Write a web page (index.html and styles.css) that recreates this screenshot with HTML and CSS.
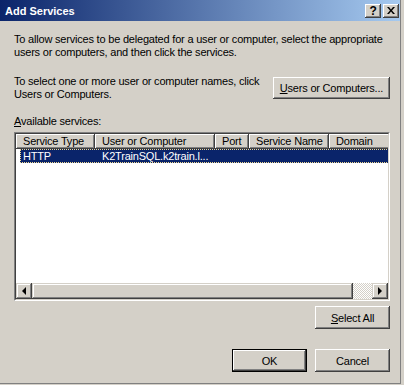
FILE: index.html
```html
<!DOCTYPE html>
<html lang="en">
  <head>
    <meta charset="UTF-8" />
    <title>Add Services</title>
    <link rel="stylesheet" href="styles.css">
  </head>
  <body>
    <div class="window">
      <div class="titlebar">
        <span class="title">Add Services</span>
        <div class="caption-buttons">
          <span class="cap-btn help">?</span>
          <span class="cap-btn">
            <svg width="8" height="7" viewBox="0 0 8 7">
              <path d="M0 0h2l2 2.5L6 0h2L5 3.5 8 7H6L4 4.5 2 7H0l3-3.5z" fill="#000"/>
            </svg>
          </span>
        </div>
      </div>

      <div class="dialog">
        <p class="intro">To allow services to be delegated for a user or computer, select the appropriate<br>users or computers, and then click the services.</p>

        <div class="select-row">
          <p>To select one or more user or computer names, click<br>Users or Computers.</p>
          <button class="btn btn-wide"><u>U</u>sers or Computers...</button>
        </div>

        <div class="list-label"><u>A</u>vailable services:</div>

        <!-- services list view -->
        <div class="listview">
          <div class="lv-inner">
            <div class="lv-header">
              <div class="col c1">Service Type</div>
              <div class="col c2">User or Computer</div>
              <div class="col c3">Port</div>
              <div class="col c4">Service Name</div>
              <div class="col c5">Domain</div>
            </div>
            <div class="lv-rows">
              <div class="lv-row selected">
                <div class="cell c1">HTTP</div>
                <div class="cell c2">K2TrainSQL.k2train.l...</div>
                <div class="cell c3"></div>
                <div class="cell c4"></div>
                <div class="cell c5"></div>
              </div>
            </div>
            <div class="hscroll">
              <div class="sb-btn"><span class="arrow left"></span></div>
              <div class="sb-thumb"></div>
              <div class="sb-track"></div>
              <div class="sb-btn"><span class="arrow right"></span></div>
            </div>
          </div>
        </div>

        <div class="button-row">
          <button class="btn"><u>S</u>elect All</button>
        </div>

        <div class="button-row footer">
          <button class="btn default">OK</button>
          <button class="btn">Cancel</button>
        </div>
      </div>
    </div>
  </body>
</html>
```

FILE: styles.css
```css
body {
  margin: 0;
  background-color: #d4d0c8;
  font-family: "Liberation Sans", Arial, sans-serif;
  font-size: 11px;
  letter-spacing: -0.2px;
  color: #000;
}

.window {
  width: 401px;
  height: 384px;
  box-sizing: border-box;
  border-right: 1px solid #808080;
  border-bottom: 1px solid #808080;
  display: flex;
  flex-direction: column;
}

.titlebar {
  height: 21px;
  display: flex;
  align-items: center;
  justify-content: space-between;
  padding: 0 1px 0 5px;
  background: linear-gradient(to right, #0a246a, #a6caf0);
}

.title {
  color: #fff;
  font-weight: bold;
  font-size: 11px;
  letter-spacing: 0;
}

.caption-buttons {
  display: flex;
  gap: 2px;
}

.cap-btn {
  width: 16px;
  height: 14px;
  box-sizing: border-box;
  background-color: #d4d0c8;
  box-shadow: inset -1px -1px #404040, inset 1px 1px #fff, inset -2px -2px #808080;
  display: flex;
  align-items: center;
  justify-content: center;
}

.cap-btn.help {
  font-weight: bold;
  font-size: 12px;
  line-height: 14px;
}

.dialog {
  padding: 12px 10px 0 14px;
  display: flex;
  flex-direction: column;
}

p {
  margin: 0;
  line-height: 13px;
  white-space: nowrap;
}

.select-row {
  margin-top: 16px;
  display: flex;
  justify-content: space-between;
  align-items: flex-start;
}

.btn {
  width: 75px;
  height: 23px;
  box-sizing: border-box;
  padding: 0;
  border: none;
  background-color: #d4d0c8;
  font-family: inherit;
  font-size: 11px;
  letter-spacing: inherit;
  color: #000;
  box-shadow: inset -1px -1px #404040, inset 1px 1px #fff, inset -2px -2px #808080, inset 2px 2px #d4d0c8;
}

.btn-wide {
  width: 117px;
  height: 22px;
  margin-top: 2px;
}

.btn.default {
  border: 1px solid #000;
}

.list-label {
  margin-top: 14px;
  line-height: 13px;
}

.listview {
  margin-top: 4px;
  height: 169px;
  box-sizing: border-box;
  border: 1px solid;
  border-color: #808080 #fff #fff #808080;
}

.lv-inner {
  height: 100%;
  box-sizing: border-box;
  border: 1px solid;
  border-color: #404040 #d4d0c8 #d4d0c8 #404040;
  background-color: #fff;
  display: flex;
  flex-direction: column;
  overflow: hidden;
}

.lv-header {
  display: flex;
  height: 15px;
  flex-shrink: 0;
}

.col {
  flex-shrink: 0;
  box-sizing: border-box;
  padding-left: 7px;
  line-height: 15px;
  background-color: #d4d0c8;
  box-shadow: inset -1px -1px #404040, inset 1px 1px #fff, inset -2px -2px #808080;
  white-space: nowrap;
  overflow: hidden;
}

.c1 { width: 79px; }
.c2 { width: 120px; }
.c3 { width: 34px; }
.c4 { width: 80px; }
.c5 { width: 70px; }

.lv-rows {
  flex: 1;
  overflow: hidden;
}

.lv-row {
  display: flex;
  height: 14px;
  margin-left: 4px;
  width: max-content;
}

.lv-row .cell {
  flex-shrink: 0;
  box-sizing: border-box;
  padding-left: 7px;
  line-height: 14px;
  white-space: nowrap;
}

.lv-row .cell.c1 {
  width: 75px;
  padding-left: 3px;
}

.lv-row.selected {
  background-color: #0a246a;
  color: #fff;
  outline: 1px dotted #f0d890;
  outline-offset: -1px;
}

.hscroll {
  display: flex;
  height: 16px;
  flex-shrink: 0;
}

.sb-btn,
.sb-thumb {
  background-color: #d4d0c8;
  box-shadow: inset -1px -1px #404040, inset 1px 1px #d4d0c8, inset -2px -2px #808080, inset 2px 2px #fff;
}

.sb-btn {
  width: 16px;
  display: flex;
  align-items: center;
  justify-content: center;
}

.sb-thumb {
  width: 321px;
}

.sb-track {
  flex: 1;
  background: repeating-conic-gradient(#fff 0 25%, #d4d0c8 0 50%) 0 0 / 2px 2px;
}

.arrow {
  width: 0;
  height: 0;
  border-top: 4px solid transparent;
  border-bottom: 4px solid transparent;
}

.arrow.left {
  border-right: 4px solid #000;
}

.arrow.right {
  border-left: 4px solid #000;
}

.button-row {
  margin-top: 5px;
  display: flex;
  justify-content: flex-end;
  gap: 8px;
}

.button-row.footer {
  margin-top: 20px;
}
```
